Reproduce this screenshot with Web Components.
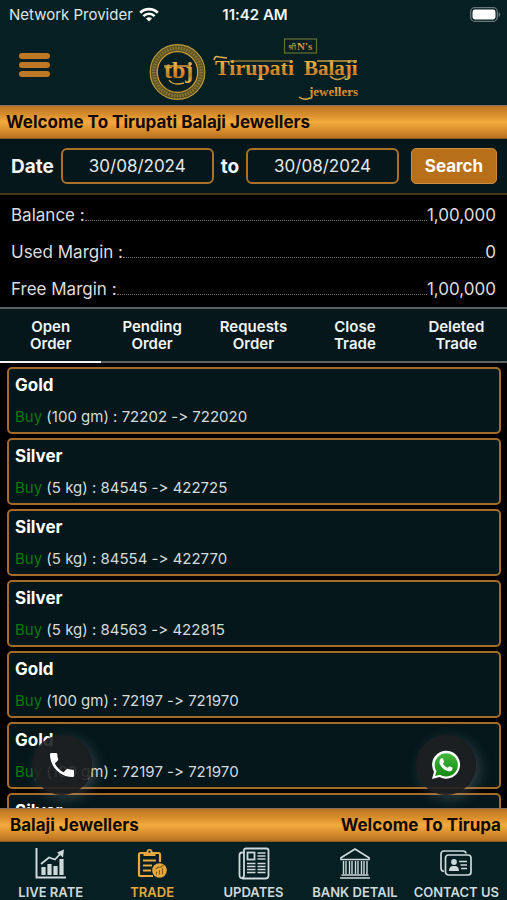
<!DOCTYPE html>
<html lang="en">
<head>
<meta charset="utf-8">
<meta name="viewport" content="width=device-width, initial-scale=1">
<title>Tirupati Balaji Jewellers</title>
<style>
  html, body { margin: 0; height: 100%; }
  body {
    --panel: #061f22;
    --card: #05171b;
    --gold: #b8731f;
    --line: #5b6264;
    background: #000;
    color: #f0f4f4;
    font-family: Inter, "Liberation Sans", sans-serif;
    font-variant-ligatures: none;
    font-feature-settings: "calt" 0;
  }
</style>
</head>
<body>
<trade-app></trade-app>

<script>
const define = (name, markup, setup) => {
  const tpl = document.createElement('template');
  tpl.innerHTML = '<style>*{box-sizing:border-box}:host{box-sizing:border-box}</style>' + markup;
  customElements.define(name, class extends HTMLElement {
    constructor() {
      super();
      this.attachShadow({ mode: 'open' }).append(tpl.content.cloneNode(true));
    }
    connectedCallback() { if (setup) setup(this, this.shadowRoot); }
  });
};

define('status-bar', `
<style>
  :host { display: grid; grid-template-columns: 1fr auto 1fr; align-items: center; height: 28px; padding: 0 6px 0 9px; font-size: 15px; }
  .left { display: flex; align-items: center; gap: 6px; color: #dfe6e6; }
  b { font-weight: 600; }
  .battery { justify-self: end; }
  svg { display: block; }
</style>
<span class="left">Network Provider
  <svg width="20" height="15" viewBox="0 0 20 15" fill="none" stroke="#fff" stroke-width="2.7">
    <path d="M1.2 5.8a12.4 12.4 0 0 1 17.6 0M4.4 9.1a7.9 7.9 0 0 1 11.2 0"/>
    <path d="M10 14.4 7 11.6a4.3 4.3 0 0 1 6 0z" fill="#fff" stroke="none"/>
  </svg>
</span>
<b>11:42 AM</b>
<svg class="battery" width="31" height="15" viewBox="0 0 31 15">
  <rect x=".7" y=".7" width="26.6" height="13.6" rx="4" fill="none" stroke="#66777a" stroke-width="1.3"/>
  <rect x="2.5" y="2.5" width="23" height="10" rx="2.4" fill="#fff"/>
  <path d="M28.6 5v5q1.6-.8 1.6-2.5T28.6 5z" fill="#66777a"/>
</svg>`);

define('brand-logo', `
<style>
  :host { display: block; }
  svg { display: block; }
  text { font-family: "Liberation Serif", serif; fill: url(#g); }
</style>
<svg width="212" height="66" viewBox="147 36 212 66" role="img" aria-label="Tirupati Balaji Jewellers">
  <defs>
    <linearGradient id="g" x1="0" y1="0" x2="0" y2="1">
      <stop offset="0" stop-color="#d9c25a"/><stop offset=".4" stop-color="#eda33a"/>
      <stop offset=".7" stop-color="#c77a28"/><stop offset="1" stop-color="#e2bd4c"/>
    </linearGradient>
  </defs>
  <circle cx="176.500" cy="72" r="24" fill="none" stroke="#5b5124" stroke-width="7"/>
  <circle cx="176.500" cy="72" r="23.800" fill="none" stroke="#8b7630" stroke-width="3.500" stroke-dasharray="1.500 1.300"/>
  <circle cx="176.500" cy="72" r="27.300" fill="none" stroke="#b79a3c" stroke-width="1.200"/>
  <circle cx="176.500" cy="72" r="20.300" fill="none" stroke="#cfa03a" stroke-width="1.300"/>
  <text x="163" y="78" font-size="24" font-weight="bold">tbj</text>
  <path d="M163 66h27M168 80q4 6 15 3" fill="none" stroke="#d9a040" stroke-width="1.300"/>
  <rect x="283.500" y="39" width="32" height="14" fill="none" stroke="#67702f" stroke-width="1.200"/>
  <text x="287" y="50" font-size="8">&#x0936;&#x094D;&#x0930;&#x0940;</text>
  <text x="296" y="50" font-size="11" font-weight="bold">N's</text>
  <text x="214" y="75" font-size="22" font-weight="bold">Tirupati</text>
  <path d="M229 61h62" stroke="#c99a3e" stroke-width="1.200"/>
  <path d="M213 60q1-5 5-3l8 1" fill="none" stroke="#e0b04a" stroke-width="1.600"/>
  <text x="303" y="75" font-size="21" font-weight="bold">Balaji</text>
  <path d="M316 61h40M329 76q7 7 16 0" fill="none" stroke="#c99a3e" stroke-width="1.300"/>
  <text x="308" y="96" font-size="13" font-weight="bold">jewellers</text>
  <path d="M298 97q5 4 11 1" fill="none" stroke="#d9b14a" stroke-width="1.500"/>
</svg>`);

define('app-header', `
<style>
  :host { display: block; background: var(--panel); }
  .bar { display: grid; grid-template-columns: 1fr auto 1fr; align-items: center; height: 77px; padding: 0 19px; }
  button { all: unset; display: flex; flex-direction: column; gap: 3px; width: 31px; cursor: pointer; padding-bottom: 3px; }
  i { height: 6px; border-radius: 3px; background: #be7724; }
  brand-logo { padding-top: 4px; }
</style>
<status-bar></status-bar>
<div class="bar">
  <button aria-label="Open menu"><i></i><i></i><i></i></button>
  <brand-logo></brand-logo>
</div>`);

define('news-ticker', `
<style>
  :host { display: flex; flex: none; align-items: center; justify-content: space-between; height: 34px; padding: 0 6px; color: #120a02;
    background: linear-gradient(#bd7523, #d98f2d 28%, #f3aa3d 50%, #d98f2d 75%, #b87020); border-top: 1px solid #7d7063; border-bottom: 1px solid #8a5a20;
    font-size: 17px; font-weight: 700; white-space: nowrap; overflow: hidden; }
</style>
<slot></slot>`);

define('date-filter', `
<style>
  form { display: flex; align-items: center; height: 56px; padding: 0 10px 0 11px; gap: 7px; background: var(--card);
    border-bottom: 2px solid #46391b; margin: 0; }
  label { font-size: 19px; font-weight: 700; }
  input { flex: 1; min-width: 0; width: 0; height: 36px; border: 2px solid #a8722b; border-radius: 6px; background: transparent;
    color: #e2e8e8; font: 400 17px Inter, sans-serif; text-align: center; padding: 0; }
  button { height: 36px; width: 86px; margin-left: 5px; border: 1px solid #cb8a3c; border-radius: 5px; background: #b86f1a; color: #fff;
    font: 700 17px Inter, sans-serif; padding: 0; }
</style>
<form>
  <label for="from">Date</label><input id="from" type="text" value="30/08/2024">
  <label for="till">to</label><input id="till" type="text" value="30/08/2024">
  <button type="button">Search</button>
</form>`);

define('balance-row', `
<style>
  :host { display: flex; align-items: center; height: 36px; font-size: 17px; color: #dcdcdc; }
  i { flex: 1; align-self: flex-end; height: 0; margin-bottom: 12px; border-bottom: 1px dotted #757575; }
</style>
<slot name="label"></slot><i></i><slot></slot>`);

define('tab-item', `
<style>
  :host { display: block; flex: 1; }
  button { all: unset; box-sizing: border-box; display: flex; flex-direction: column; align-items: center; justify-content: center; width: 100%; height: 100%;
    text-align: center; font-size: 15px; line-height: 17px; font-weight: 600; cursor: pointer; border-bottom: 2px solid var(--line); }
  :host([selected]) button { border-color: #f4f4f4; }
</style>
<button role="tab"><slot></slot></button>`);

define('tab-bar', `
<style>
  :host { display: flex; height: 56px; background: var(--card); border-top: 2px solid var(--line); }
</style>
<slot></slot>`);

define('order-card', `
<style>
  :host { display: flex; flex: none; flex-direction: column; justify-content: space-between; height: 67px; padding: 5px 6px; background: var(--card);
    border: 2px solid #a46c2b; border-radius: 5px; }
  h3 { margin: 0; font-size: 17px; line-height: 22px; font-weight: 700; color: #fff; }
  p { margin: 0; font-size: 15px; line-height: 20px; color: #d5dcdc; }
  ::slotted([slot="side"]) { color: #077a0c; }
</style>
<h3><slot name="metal"></slot></h3>
<p><slot name="side"></slot> <slot></slot></p>`);

define('float-button', `
<style>
  a { display: flex; align-items: center; justify-content: center; width: 60px; height: 60px; border-radius: 50%;
    background: rgba(31, 32, 34, .9); box-shadow: 4px 4px 14px rgba(150, 160, 165, .3); }
</style>
<a href="#"><slot></slot></a>`, (el, root) => root.querySelector('a').setAttribute('aria-label', el.getAttribute('label')));

define('nav-item', `
<style>
  :host { display: block; flex: 1; min-width: 0; }
  a { display: flex; flex-direction: column; align-items: center; gap: 4px; padding-top: 5px; color: #ced9dc; text-decoration: none;
    font-size: 13px; line-height: 16px; font-weight: 600; white-space: nowrap; }
  :host([current]) a { color: #e8a83e; }
</style>
<a href="#"><slot name="icon"></slot><slot></slot></a>`);

define('nav-bar', `
<style>
  :host { display: flex; flex: none; height: 58px; background: var(--panel); }
  svg { display: block; }
</style>
<nav-item>
  <svg slot="icon" width="32" height="33" viewBox="0 0 32 33" fill="none" stroke="currentColor">
    <path d="M1.500 1v29.500H31" stroke-width="2"/>
    <path d="M8.500 28v-8M14.500 28V17M20.500 28v-9M26.500 28V12" stroke-width="4.200"/>
    <path d="M6 17l8-6.500 6 2 6-6.500" stroke-width="1.800"/>
    <path d="M22 5.500l7-3-1 8z" fill="currentColor" stroke="none"/>
  </svg>LIVE RATE</nav-item>
<nav-item current>
  <svg slot="icon" width="32" height="33" viewBox="0 0 32 33" fill="none" stroke="currentColor">
    <path d="M8 6H4.500Q3 6 3 7.500v20Q3 29 4.500 29H17M18 6h4.500Q24 6 24 7.500V15" stroke-width="2.200"/>
    <path d="M7.500 9V5h3a3 3 0 0 1 6 0h3v4z" fill="currentColor" stroke="none"/>
    <circle cx="13.500" cy="4.700" r="1.100" fill="#061f22" stroke="none"/>
    <path d="M7 13.500h13M7 18.500h9M7 23.500h8" stroke-width="2"/>
    <circle cx="23.500" cy="23.500" r="7.300" fill="currentColor" stroke="none"/>
    <path d="M20.500 27.500v-3M23.500 27.500v-4.500M26.500 27.500v-6.500M19.500 22l3-2 2 .500 3-2.500" stroke="#7c5a22" stroke-width="1.100"/>
  </svg>TRADE</nav-item>
<nav-item>
  <svg slot="icon" width="32" height="33" viewBox="0 0 32 33" fill="none" stroke="currentColor" stroke-width="1.800">
    <path d="M6 5.500H4Q1.500 5.500 1.500 8v20q0 3.500 3.500 3.500h22.500q3 0 3-3V3.500q0-2-2-2H8q-2 0-2 2V28q0 3-2.200 3"/>
    <rect x="9.500" y="5.500" width="7" height="7"/>
    <path d="M19.500 6h8M19.500 9h8M19.500 12h8M9 16.500h8.500M9 19.500h8.500M9 22.500h8.500M9 25.500h8.500M19.500 16.500h8M19.500 19.500h8M19.500 22.500h8M19.500 25.500h8" stroke-width="1.300"/>
  </svg>UPDATES</nav-item>
<nav-item>
  <svg slot="icon" width="32" height="33" viewBox="0 0 32 33" fill="none" stroke="currentColor">
    <path d="M2 12.500v-1.700L16 2l14 8.800v1.700z" stroke-width="1.700"/>
    <path d="M4.500 14v13M7 14v13M10.500 14v13M13 14v13M16.500 14v13M19 14v13M22.500 14v13M25 14v13M28 14v13" stroke-width="1.400"/>
    <path d="M2.500 28h27M1 31h30" stroke-width="1.500"/>
  </svg>BANK DETAIL</nav-item>
<nav-item>
  <svg slot="icon" width="32" height="33" viewBox="0 0 32 33" fill="none" stroke="currentColor" stroke-width="1.700">
    <path d="M4 24.500Q1 24 1 21V7q0-3 3-3h19q3 0 3 2.500"/>
    <rect x="5.500" y="8" width="25.500" height="20" rx="3"/>
    <circle cx="14" cy="15" r="2.900" fill="currentColor" stroke="none"/>
    <path d="M9 24q0-4.500 3.500-5h3q3.500.500 3.500 5z" fill="currentColor" stroke="none"/>
    <path d="M19 14.500h8M20.500 18h6.500M21 21.500h6"/>
  </svg>CONTACT US</nav-item>`);

const orders = [
  ['Gold', 'Buy', '(100 gm) : 72202 -> 722020'],
  ['Silver', 'Buy', '(5 kg) : 84545 -> 422725'],
  ['Silver', 'Buy', '(5 kg) : 84554 -> 422770'],
  ['Silver', 'Buy', '(5 kg) : 84563 -> 422815'],
  ['Gold', 'Buy', '(100 gm) : 72197 -> 721970'],
  ['Gold', 'Buy', '(100 gm) : 72197 -> 721970'],
  ['Silver', '', '']
];

define('order-list', `
<style>
  :host { display: flex; flex-direction: column; gap: 4px; flex: 1; min-height: 0; overflow: hidden; padding: 4px 6px 0 7px; }
</style>`, (el, root) => {
  const span = (slot, text) => {
    const s = document.createElement('span');
    s.slot = slot;
    s.textContent = text;
    return s;
  };
  for (const [metal, side, detail] of orders) {
    const card = document.createElement('order-card');
    card.append(span('metal', metal), span('side', side), detail);
    root.append(card);
  }
});

define('trade-app', `
<style>
  :host { display: flex; flex-direction: column; height: 100vh; overflow: hidden; }
  .balances { padding: 2px 11px 0; }
  .balances balance-row + balance-row { margin-top: 1px; }
  main { position: relative; display: flex; flex-direction: column; flex: 1; min-height: 0; overflow: hidden; }
  .call, .chat { position: absolute; bottom: 13px; }
  .call { left: 32px; }
  .chat { right: 31px; }
  svg { display: block; }
  .end { padding-left: 4px; }
</style>
<app-header></app-header>
<news-ticker>Welcome To Tirupati Balaji Jewellers</news-ticker>
<date-filter></date-filter>
<div class="balances">
  <balance-row><span slot="label">Balance :</span>1,00,000</balance-row>
  <balance-row><span slot="label">Used Margin :</span>0</balance-row>
  <balance-row><span slot="label">Free Margin :</span>1,00,000</balance-row>
</div>
<tab-bar role="tablist">
  <tab-item selected><span>Open</span><span>Order</span></tab-item>
  <tab-item><span>Pending</span><span>Order</span></tab-item>
  <tab-item><span>Requests</span><span>Order</span></tab-item>
  <tab-item><span>Close</span><span>Trade</span></tab-item>
  <tab-item><span>Deleted</span><span>Trade</span></tab-item>
</tab-bar>
<main>
  <order-list></order-list>
  <float-button class="call" label="Call">
    <svg width="32" height="32" viewBox="0 0 24 24" fill="#fff"><path d="M6.620 10.790c1.440 2.830 3.760 5.140 6.590 6.590l2.200-2.200c.270-.270.670-.360 1.020-.240 1.120.370 2.330.570 3.570.570.550 0 1 .450 1 1V20c0 .550-.450 1-1 1C10.610 21 3 13.390 3 4c0-.550.450-1 1-1h3.500c.550 0 1 .450 1 1 0 1.250.200 2.450.570 3.570.110.350.030.740-.250 1.020z"/></svg>
  </float-button>
  <float-button class="chat" label="WhatsApp">
    <svg width="30" height="30" viewBox="0 0 30 30">
      <defs><linearGradient id="w" x1="0" y1="0" x2="0" y2="1"><stop offset="0" stop-color="#45b83c"/><stop offset="1" stop-color="#128a14"/></linearGradient></defs>
      <path d="M1 29l2-7.300A14 14 0 1 1 8.500 27z" fill="#fff"/>
      <path d="M4 26l1.500-4.800A11.600 11.600 0 1 1 9 24.700z" fill="url(#w)"/>
      <path d="M10.800 8.300c.8 0 1 0 1.300.8l1 2.400c.2.600-.9 1.500-1.100 1.900 1 2 2.600 3.400 4.700 4.300.4.100 1.400-1.700 1.900-1.500l2.600 1.300c.7.400.2 2.200-.5 2.900-1 .9-2.300 1.200-3.900.7-4-1.300-6.600-4-8-7.200-.9-2.400.3-5.600 2-5.600z" fill="#fff"/>
    </svg>
  </float-button>
</main>
<news-ticker><span class="end">Balaji Jewellers</span><span>Welcome To Tirupa</span></news-ticker>
<nav-bar></nav-bar>`);
</script>
</body>
</html>
